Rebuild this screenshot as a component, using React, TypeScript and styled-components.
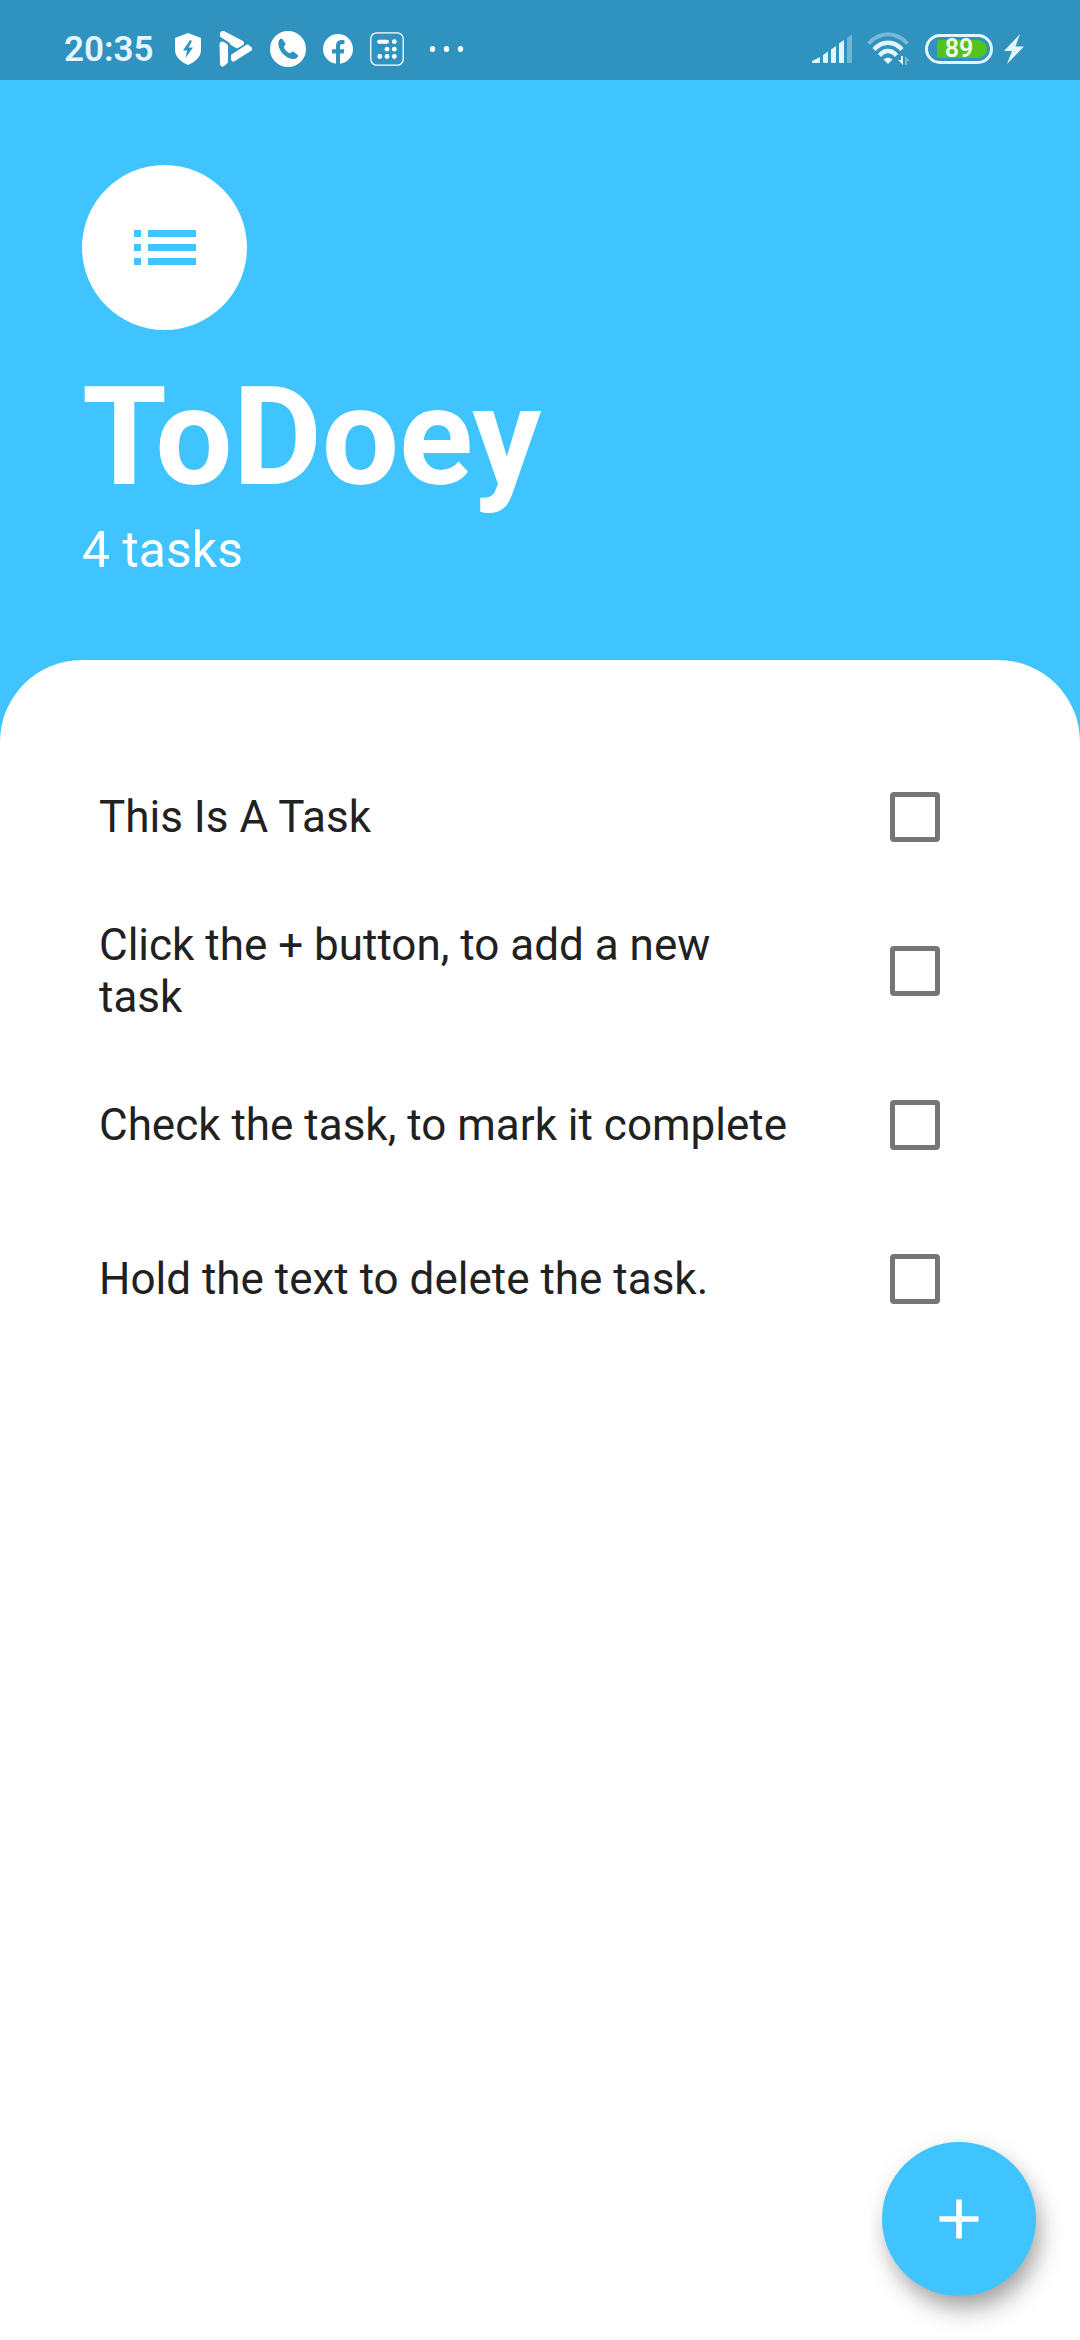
import React, { useState } from "react";
import styled, { createGlobalStyle } from "styled-components";

const BLUE = "#40c4ff";

const GlobalStyle = createGlobalStyle`
  *, *::before, *::after { box-sizing: border-box; }
  body {
    margin: 0;
    background: ${BLUE};
    font-family: Roboto, "Noto Sans", sans-serif;
  }
`;

const Screen = styled.div`
  min-height: 100vh;
  display: flex;
  flex-direction: column;
  background: ${BLUE};
`;

const StatusBar = styled.div`
  display: flex;
  justify-content: space-between;
  align-items: center;
  height: 80px;
  padding: 18px 56px 0 64px;
  background: #3092bf;
  color: #e6f5fd;
`;

const StatusGroup = styled.div<{ $gap: number }>`
  display: flex;
  align-items: center;
  gap: ${(p) => p.$gap}px;

  svg { display: block; flex: none; }
`;

const Clock = styled.time`
  padding-top: 2px;
  font-size: 35px;
  line-height: 40px;
  font-weight: 600;
`;

const Battery = styled.div`
  display: flex;
  width: 68px;
  height: 30px;
  padding: 3px;
  border: 3px solid #e6f5fd;
  border-radius: 15px;
`;

const BatteryLevel = styled.div`
  display: flex;
  align-items: center;
  justify-content: center;
  width: 50px;
  margin-left: auto;
  padding-right: 6px;
  border-radius: 2px 9px 9px 2px;
  background: #52c41f;
  color: #f0fbe9;
  font-size: 25px;
  line-height: 18px;
  font-weight: 600;
`;

const Header = styled.header`
  padding: 85px 82px 78px;
  color: #fff;
`;

const Logo = styled.div`
  display: flex;
  align-items: center;
  justify-content: center;
  width: 165px;
  height: 165px;
  border-radius: 50%;
  background: #fff;
`;

const Title = styled.h1`
  margin: 26px 0 0;
  font-size: 137px;
  line-height: 162px;
  font-weight: 700;
`;

const Count = styled.p`
  margin: 0;
  font-size: 50px;
  line-height: 64px;
`;

const Sheet = styled.main`
  flex: 1;
  padding: 80px 55px 0;
  border-radius: 82px 82px 0 0;
  background: #fff;
`;

const TaskList = styled.ul`
  list-style: none;
  margin: 0;
  padding: 0;
`;

const TaskRow = styled.li`
  display: flex;
  align-items: center;
  gap: 52px;
  min-height: 154px;
  padding: 0 44px;
`;

const TaskLabel = styled.label<{ $done: boolean }>`
  flex: 1;
  color: #212121;
  font-size: 44px;
  line-height: 52px;
  text-decoration: ${(p) => (p.$done ? "line-through" : "none")};
`;

const CheckBox = styled.input`
  appearance: none;
  flex: none;
  width: 50px;
  height: 50px;
  margin: 0 41px;
  border: 5px solid #757575;
  border-radius: 4px;
  background: #fff;

  &:checked {
    border-color: ${BLUE};
    background: ${BLUE};
  }
`;

const AddButton = styled.button`
  position: fixed;
  right: 44px;
  bottom: 44px;
  display: flex;
  align-items: center;
  justify-content: center;
  width: 154px;
  height: 154px;
  padding: 0;
  border: 0;
  border-radius: 50%;
  background: ${BLUE};
  box-shadow: 6px 16px 26px -4px rgba(0, 0, 0, 0.34), 2px 4px 24px rgba(0, 0, 0, 0.1);
`;

const ShieldIcon = () => (
  <svg width="28" height="32" viewBox="0 0 28 32">
    <path fill="#fff" d="M14 0 27 5V17C27 24 21 29 14 32 7 29 1 24 1 17V5Z" />
    <path fill="#3092bf" d="M16 7 9 17.5h4.2L11.5 25 19 14.500h-4.400L18 8Z" />
  </svg>
);

const PlayIcon = () => (
  <svg width="34" height="36" viewBox="0 0 34 36">
    <g fill="#fff" stroke="#fff" strokeLinejoin="round">
      <path strokeWidth="6" d="M4 3 22 12.500 18.500 14.500 4 5.500Z" />
      <path strokeWidth="5" d="M3 13 6.500 15V30.500L3.500 33Z" />
      <path strokeWidth="5" d="M14.500 24 28 15.800 30.500 18 14.500 28Z" />
    </g>
    <path d="M0 6 10 12.500V36M9.500 24.500 28.500 12" fill="none" stroke="#3092bf" strokeWidth="1.500" />
  </svg>
);

const PhoneIcon = () => (
  <svg width="36" height="36" viewBox="0 0 36 36">
    <circle cx="18" cy="18" r="18" fill="#fff" />
    <path
      fill="#3092bf"
      d="M8.500 10.500C9.500 8 11.500 7 12.300 8l3 4.200c.7 1-.1 2.100-1.600 3.500 1 3.200 3 5.200 6.500 6.800 1.500-1.700 2.600-2.300 3.600-1.600l4 3c1.200 1-1 4-4.300 4.100C15.500 28 7 18.500 8.500 10.500Z"
    />
  </svg>
);

const FacebookIcon = () => (
  <svg width="30" height="30" viewBox="0 0 30 30">
    <circle cx="15" cy="15" r="15" fill="#fff" />
    <path
      fill="#3092bf"
      d="M13 30V19.500H9V15.200h4V12c0-4 2.300-6 5.800-6 1 0 2 .1 2.700.3v3.800h-2c-2 0-2.500 1-2.500 2.400v2.700h4.300l-.7 4.300H17V30Z"
    />
  </svg>
);

const CalculatorIcon = () => (
  <svg width="34" height="34" viewBox="0 0 34 34" fill="#fff">
    <rect x=".8" y=".8" width="32.400" height="32.400" rx="6" fill="none" stroke="#fff" strokeWidth="1.300" />
    <rect x="7" y="7.700" width="12" height="4" rx="2" />
    <circle cx="24.300" cy="9.700" r="2.400" />
    <circle cx="17" cy="17.200" r="2.400" />
    <circle cx="24.300" cy="17.200" r="2.400" />
    <circle cx="9.700" cy="24.500" r="2.400" />
    <circle cx="17" cy="24.500" r="2.400" />
    <circle cx="24.300" cy="24.500" r="2.400" />
  </svg>
);

const MoreIcon = () => (
  <svg width="44" height="6" viewBox="0 0 44 6" fill="#fff">
    <ellipse cx="11.500" cy="3" rx="2.700" ry="3" />
    <ellipse cx="25.500" cy="3" rx="2.700" ry="3" />
    <ellipse cx="39.500" cy="3" rx="2.700" ry="3" />
  </svg>
);

const SignalIcon = () => (
  <svg width="40" height="30" viewBox="0 0 40 30" fill="#e6f5fd">
    <path d="M0 27 8 23V28Q8 29 7 29H1Q0 29 0 28Z" />
    <path d="M11 21 16 17.500V28Q16 29 15 29H12Q11 29 11 28Z" />
    <path d="M19 15.500 24 12V28Q24 29 23 29H20Q19 29 19 28Z" />
    <path d="M27 9.500 32 6V28Q32 29 31 29H28Q27 29 27 28Z" />
    <path opacity=".35" d="M35 4 40 .5V28Q40 29 39 29H36Q35 29 35 28Z" />
  </svg>
);

const WifiIcon = () => (
  <svg width="43" height="34" viewBox="0 0 43 34" fill="none" stroke="#e6f5fd">
    <path opacity=".4" strokeWidth="4" d="M1.500 11.500C13-1 29-1 40.500 11.500" />
    <path strokeWidth="4.300" d="M7 17.500C15 8.500 27 8.500 35 17.500" />
    <path strokeWidth="4.300" d="M12.500 23.500C17.500 17.500 24.500 17.500 29.500 23.500" />
    <path fill="#e6f5fd" stroke="none" d="M16.500 27.500C19 25 23 25 25.500 27.500L21 32Z" />
    <path fill="#e6f5fd" stroke="none" d="M34 24H36V33L31 28H34Z" />
    <path opacity=".4" fill="#e6f5fd" stroke="none" d="M38 24 43 29H40V33H38Z" />
  </svg>
);

const BoltIcon = () => (
  <svg width="20" height="30" viewBox="0 0 20 30">
    <path fill="#e6f5fd" d="M16 0 0 17H8L3 30 20 12.500H11.500Z" />
  </svg>
);

const ListIcon = () => (
  <svg width="62" height="35" viewBox="0 0 62 35" fill={BLUE} shapeRendering="crispEdges">
    {[0, 14, 28].map((y) => (
      <React.Fragment key={y}>
        <rect x="0" y={y} width="7" height="7" />
        <rect x="14" y={y} width="48" height="7" />
      </React.Fragment>
    ))}
  </svg>
);

const PlusIcon = () => (
  <svg width="40" height="40" viewBox="0 0 40 40">
    <path d="M20 0.500V39.500M0.500 20H39.500" stroke="#fff" strokeWidth="5.600" />
  </svg>
);

interface Task {
  id: string;
  name: string;
  done: boolean;
}

const initialTasks: Task[] = [
  { id: "task-1", name: "This Is A Task", done: false },
  { id: "task-2", name: "Click the + button, to add a new task", done: false },
  { id: "task-3", name: "Check the task, to mark it complete", done: false },
  { id: "task-4", name: "Hold the text to delete the task.", done: false },
];

export default function App() {
  const [tasks, setTasks] = useState(initialTasks);

  const toggle = (id: string) =>
    setTasks((list) => list.map((t) => (t.id === id ? { ...t, done: !t.done } : t)));

  return (
    <Screen>
      <GlobalStyle />
      <StatusBar>
        <StatusGroup $gap={20}>
          <Clock>20:35</Clock>
          <StatusGroup $gap={17}>
            <ShieldIcon />
            <PlayIcon />
            <PhoneIcon />
            <FacebookIcon />
            <CalculatorIcon />
            <MoreIcon />
          </StatusGroup>
        </StatusGroup>
        <StatusGroup $gap={15}>
          <SignalIcon />
          <WifiIcon />
          <StatusGroup $gap={11}>
            <Battery>
              <BatteryLevel>89</BatteryLevel>
            </Battery>
            <BoltIcon />
          </StatusGroup>
        </StatusGroup>
      </StatusBar>
      <Header>
        <Logo>
          <ListIcon />
        </Logo>
        <Title>ToDoey</Title>
        <Count>{tasks.length} tasks</Count>
      </Header>
      <Sheet>
        <TaskList>
          {tasks.map((task) => (
            <TaskRow key={task.id}>
              <TaskLabel htmlFor={task.id} $done={task.done}>
                {task.name}
              </TaskLabel>
              <CheckBox
                id={task.id}
                type="checkbox"
                checked={task.done}
                onChange={() => toggle(task.id)}
              />
            </TaskRow>
          ))}
        </TaskList>
      </Sheet>
      <AddButton type="button" aria-label="Add task">
        <PlusIcon />
      </AddButton>
    </Screen>
  );
}
